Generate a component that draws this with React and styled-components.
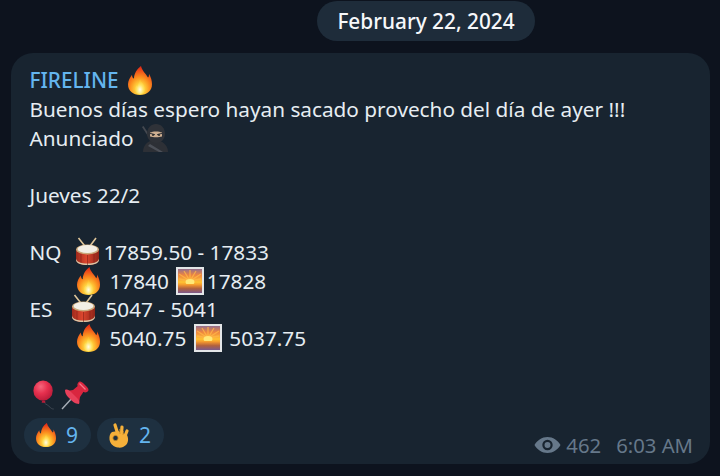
import React from "react";
import styled, { createGlobalStyle } from "styled-components";

const GlobalStyle = createGlobalStyle`
  html, body {
    margin: 0;
    padding: 0;
    background: #0d131e;
  }
  body {
    font-family: "Noto Sans", "Open Sans", sans-serif;
    overflow: hidden;
  }
`;

const Page = styled.div`
  width: 720px;
  height: 476px;
  box-sizing: border-box;
  padding: 1px 0 0 11px;
  display: flex;
  flex-direction: column;
  align-items: flex-start;
`;

const DatePill = styled.div`
  height: 40px;
  width: 218px;
  margin-left: 306px;
  border-radius: 20px;
  background: #1e2c3a;
  color: #f6f8fa;
  font-size: 20.8px;
  font-weight: 500;
  display: flex;
  align-items: center;
  justify-content: center;
`;

const Bubble = styled.div`
  width: 699px;
  height: 411px;
  margin-top: 12px;
  box-sizing: border-box;
  padding: 13.4px 17px 0 18.5px;
  border-radius: 22px;
  background: #182430;
  color: #e6edf2;
  font-size: 20.75px;
  display: flex;
  flex-direction: column;
`;

const Line = styled.div`
  height: 28.6px;
  line-height: 28.6px;
  display: flex;
  align-items: center;
  white-space: pre;
  padding-left: ${(p) => p.$indent || 0}px;
`;

const Sender = styled.span`
  color: #64b5ef;
  font-weight: 500;
`;

const Piece = styled.span`
  margin-left: ${(p) => p.$left || 0}px;
`;

const Glyph = styled.svg`
  flex: none;
  width: ${(p) => p.$w}px;
  height: ${(p) => p.$h}px;
  margin-left: ${(p) => p.$left || 0}px;
  overflow: visible;
`;

const Footer = styled.div`
  display: flex;
  align-items: flex-end;
  justify-content: space-between;
  margin: 8.6px 0 0 -5.5px;
`;

const Reactions = styled.div`
  display: flex;
  gap: 6px;
`;

const Reaction = styled.div`
  width: 67px;
  height: 34px;
  box-sizing: border-box;
  padding-left: 12px;
  border-radius: 17px;
  background: #1e3040;
  color: #64b5ef;
  font-size: 21px;
  display: flex;
  align-items: center;
  gap: 10px;
`;

const Meta = styled.div`
  display: flex;
  align-items: center;
  color: #66788a;
  font-size: 20.3px;
  height: 28px;
  margin-bottom: -7px;
`;

const EyeIcon = styled.svg`
  width: 27px;
  height: 20px;
  margin-right: 5px;
`;

const Time = styled.span`
  margin-left: 15px;
`;

const Fire = ({ left, w = 23, h = 28 }) => (
  <Glyph viewBox="0 0 24 30" $left={left} $w={w} $h={h} preserveAspectRatio="none">
    <defs>
      <radialGradient id="fireOuter" cx="50%" cy="80%" r="75%">
        <stop offset="0" stopColor="#fff6b8" />
        <stop offset="0.25" stopColor="#ffd23c" />
        <stop offset="0.55" stopColor="#fb8f1e" />
        <stop offset="1" stopColor="#e62d17" />
      </radialGradient>
      <radialGradient id="fireCore" cx="50%" cy="70%" r="60%">
        <stop offset="0" stopColor="#fffde6" />
        <stop offset="0.55" stopColor="#ffe364" />
        <stop offset="1" stopColor="#ffc22c" />
      </radialGradient>
    </defs>
    <path
      fill="url(#fireOuter)"
      d="M13 0c1 5 5 8 7 12 1-1 1-2 1-4 2 4 3 7 3 11 0 7-5 11-12 11S0 26 0 19c0-4 2-7 4-10 0 2 1 4 2 4 0-5 3-10 7-13z"
    />
    <path
      fill="url(#fireCore)"
      d="M12 14c1 3 5 5 5 10 0 3-2 5-5 5s-5-2-5-5c0-2 1-3 2-4 0 1 .5 1.500 1 1.500 0-3 1-5 2-7.500z"
    />
  </Glyph>
);

const Ninja = ({ left }) => (
  <Glyph viewBox="0 0 28 28" $left={left} $w={28} $h={28}>
    <path d="M1 3l1.500-1 13 20-1.500 1z" fill="#454950" />
    <path d="M2 28c0-7 5-12 12-12s13 5 13 12z" fill="#2d3036" />
    <path d="M9 20l13 8h-4L7 22z" fill="#4c5058" />
    <path d="M6 10c0-6 4-10 9-10s9 4 9 10c0 5-4 9-9 9s-9-4-9-9z" fill="#2f3238" />
    <path d="M9 8.500c3-1.500 9-1.500 12 0v4c-3 1-9 1-12 0z" fill="#cdae90" />
    <path d="M9 9.500c2 .2 3.500.5 5 1.300M21 9.500c-2 .2-3.500.5-5 1.300" stroke="#2f3238" strokeWidth="1" fill="none" />
    <circle cx="12" cy="11" r="0.9" fill="#1c1c1c" />
    <circle cx="18" cy="11" r="0.9" fill="#1c1c1c" />
  </Glyph>
);

const Drum = ({ left }) => (
  <Glyph viewBox="0 0 23 26" $left={left} $w={23} $h={26}>
    <defs>
      <linearGradient id="drumBody" x1="0" y1="0" x2="1" y2="0">
        <stop offset="0" stopColor="#a02a1c" />
        <stop offset="0.45" stopColor="#dc462e" />
        <stop offset="1" stopColor="#8f2418" />
      </linearGradient>
    </defs>
    <path d="M2.500 -1l9.500 12M20 -1l-9 12" stroke="#e0c69a" strokeWidth="1.600" />
    <path d="M0 10v11c0 3 5 5 11.500 5S23 24 23 21V10z" fill="url(#drumBody)" />
    <path d="M0 21c0 3 5 5 11.500 5S23 24 23 21v-1.500c0 3-5 5-11.500 5S0 22.500 0 19.500z" fill="#d8c8a8" />
    <path d="M5 15v9M11.500 16v10M18 15v9" stroke="#84201a" strokeWidth="0.6" />
    <ellipse cx="11.500" cy="10.500" rx="11.500" ry="5" fill="#c9a87a" />
    <ellipse cx="11.500" cy="10" rx="10" ry="4" fill="#f3efe6" />
  </Glyph>
);

const Sunset = ({ left }) => (
  <Glyph viewBox="0 0 28 28" $left={left} $w={28} $h={28}>
    <defs>
      <linearGradient id="skyGrad" x1="0" y1="0" x2="0" y2="1">
        <stop offset="0" stopColor="#93708f" />
        <stop offset="0.25" stopColor="#ee8440" />
        <stop offset="0.55" stopColor="#ffc232" />
        <stop offset="0.66" stopColor="#f5982e" />
        <stop offset="0.82" stopColor="#b0603f" />
        <stop offset="1" stopColor="#7b5a8c" />
      </linearGradient>
    </defs>
    <rect width="28" height="28" fill="#e3e6e8" />
    <rect x="2" y="2" width="24" height="24" fill="url(#skyGrad)" />
    <path
      d="M14 14L14 3M14 14L8 4M14 14L20 4M14 14L3 7M14 14L25 7M14 14L3 12M14 14L25 12"
      stroke="#ffb648"
      strokeWidth="1.300"
      opacity="0.8"
    />
    <ellipse cx="14" cy="15" rx="4.500" ry="3" fill="#ffe878" />
    <rect x="2" y="17" width="24" height="1" fill="#f6a02e" />
  </Glyph>
);

const Balloon = () => (
  <Glyph viewBox="0 0 25 30" $left={3} $w={25} $h={29}>
    <defs>
      <radialGradient id="balloonGrad" cx="38%" cy="30%" r="70%">
        <stop offset="0" stopColor="#f4667c" />
        <stop offset="0.5" stopColor="#e6304e" />
        <stop offset="1" stopColor="#bc1c3a" />
      </radialGradient>
    </defs>
    <path d="M11 21c0 3 3 3 5 5 2 2 3 3 5 3" stroke="#48515c" strokeWidth="0.8" fill="none" />
    <ellipse cx="10" cy="10" rx="10" ry="10.500" fill="url(#balloonGrad)" />
    <path d="M9 20.500h3l.5 2h-4z" fill="#b81c38" />
  </Glyph>
);

const Pin = ({ left }) => (
  <Glyph viewBox="0 0 28 29" $left={left} $w={28} $h={29}>
    <path d="M1 28l11-12" stroke="#a8afb8" strokeWidth="1.400" />
    <path d="M6 10l6-1 6-5 5 6-4 6-1 6z" fill="#d9263f" />
    <path d="M4 9c2-1 4 0 6 2l6 6c2 2 3 4 2 6-4 0-7-3-10-6S4 12 4 9z" fill="#e8405a" />
    <path d="M17 2c1-2 3-2 5 0l4 4c2 2 2 4 0 5-2 1-4 0-6-2l-2-2c-2-2-2-4-1-5z" fill="#d9263f" />
    <path d="M18.500 2.500l6 6" stroke="#f5788a" strokeWidth="1.200" />
  </Glyph>
);

const OkHand = () => (
  <Glyph viewBox="0 0 20 25" $w={20} $h={25}>
    <path d="M8.500 10L6 2M12.500 10L13 4M16 13l2-5" stroke="#f5b03a" strokeWidth="3.200" strokeLinecap="round" />
    <path d="M3 9l6-1 9 4c2 4 1 8-1 10-2 2-5 3-8 2.500-4-.5-8-3.500-8.500-8C.2 13 1 10.500 3 9z" fill="#f5b03a" />
    <path d="M10.500 6l.5 5M14.500 8l-.5 4" stroke="#c98a22" strokeWidth="0.7" />
    <circle cx="6.500" cy="15" r="2.600" fill="#1e3040" stroke="#c98a22" strokeWidth="0.8" />
  </Glyph>
);

const App = () => (
  <>
    <GlobalStyle />
    <Page>
      <DatePill>February 22, 2024</DatePill>
      <Bubble>
        <Line>
          <Sender>FIRELINE</Sender>
          <Fire left={9} w={24} h={29} />
        </Line>
        <Line>Buenos días espero hayan sacado provecho del día de ayer !!!</Line>
        <Line>
          Anunciado
          <Ninja left={7} />
        </Line>
        <Line />
        <Line>Jueves 22/2</Line>
        <Line />
        <Line>
          NQ
          <Drum left={15} />
          <Piece $left={4}>17859.50 - 17833</Piece>
        </Line>
        <Line $indent={47}>
          <Fire />
          <Piece $left={10}>17840</Piece>
          <Sunset left={7} />
          <Piece $left={3}>17828</Piece>
        </Line>
        <Line>
          ES
          <Drum left={20} />
          <Piece $left={10}>5047 - 5041</Piece>
        </Line>
        <Line $indent={47}>
          <Fire />
          <Piece $left={10}>5040.75</Piece>
          <Sunset left={8} />
          <Piece $left={7}>5037.75</Piece>
        </Line>
        <Line />
        <Line>
          <Balloon />
          <Pin left={3} />
        </Line>
        <Footer>
          <Reactions>
            <Reaction>
              <Fire w={20} h={24} />
              9
            </Reaction>
            <Reaction>
              <OkHand />
              2
            </Reaction>
          </Reactions>
          <Meta>
            <EyeIcon viewBox="0 0 27 20">
              <path
                fill="#66788a"
                fillRule="evenodd"
                d="M13.500 2C19 2 23.800 5.400 26.500 10 23.800 14.600 19 18 13.500 18S3.200 14.600.5 10C3.200 5.400 8 2 13.500 2zm0 2.800a5.200 5.200 0 100 10.400 5.200 5.200 0 000-10.400zm0 2.200a3 3 0 110 6 3 3 0 010-6z"
              />
            </EyeIcon>
            462
            <Time>6:03 AM</Time>
          </Meta>
        </Footer>
      </Bubble>
    </Page>
  </>
);

export default App;
